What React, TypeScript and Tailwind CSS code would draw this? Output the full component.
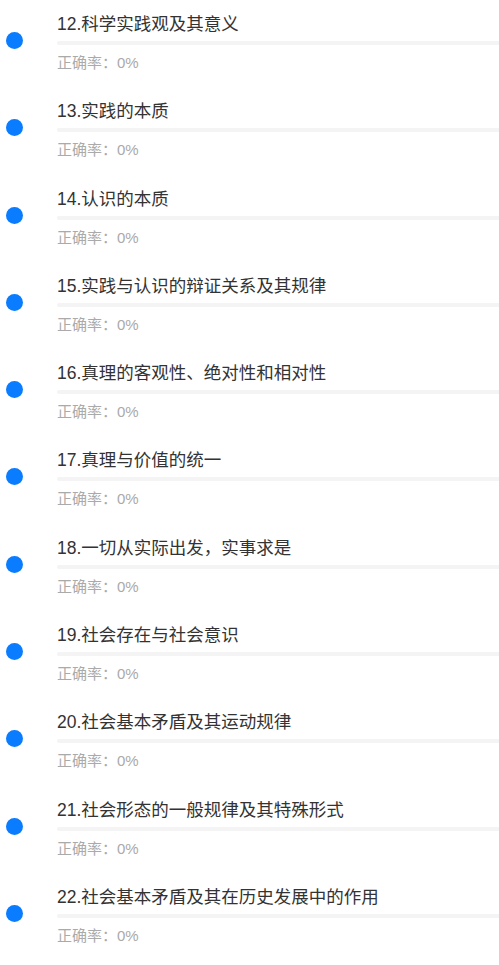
const items = [
  '12.科学实践观及其意义',
  '13.实践的本质',
  '14.认识的本质',
  '15.实践与认识的辩证关系及其规律',
  '16.真理的客观性、绝对性和相对性',
  '17.真理与价值的统一',
  '18.一切从实际出发，实事求是',
  '19.社会存在与社会意识',
  '20.社会基本矛盾及其运动规律',
  '21.社会形态的一般规律及其特殊形式',
  '22.社会基本矛盾及其在历史发展中的作用',
]

export default function App() {
  return (
    <div className="w-[499px] h-[965px] overflow-hidden bg-white font-['Helvetica','Liberation_Sans','Noto_Sans_CJK_SC',sans-serif]">
      {items.map(title => (
        <div key={title} className="flex h-[87.3px]">
          <div className="w-[57px] shrink-0 pl-[6px] pt-[32px]">
            <div className="w-[17px] h-[17px] rounded-full bg-[#0a7cff]" />
          </div>
          <div className="flex-1 pt-3">
            <div className="h-6 leading-6 text-[17.5px] text-[#333]">{title}</div>
            <div className="mt-[5px] h-1 rounded-l-full bg-[#f4f4f4]" />
            <div className="mt-2 h-5 leading-5 text-[15px] text-[#aaa]">正确率：0%</div>
          </div>
        </div>
      ))}
    </div>
  )
}
